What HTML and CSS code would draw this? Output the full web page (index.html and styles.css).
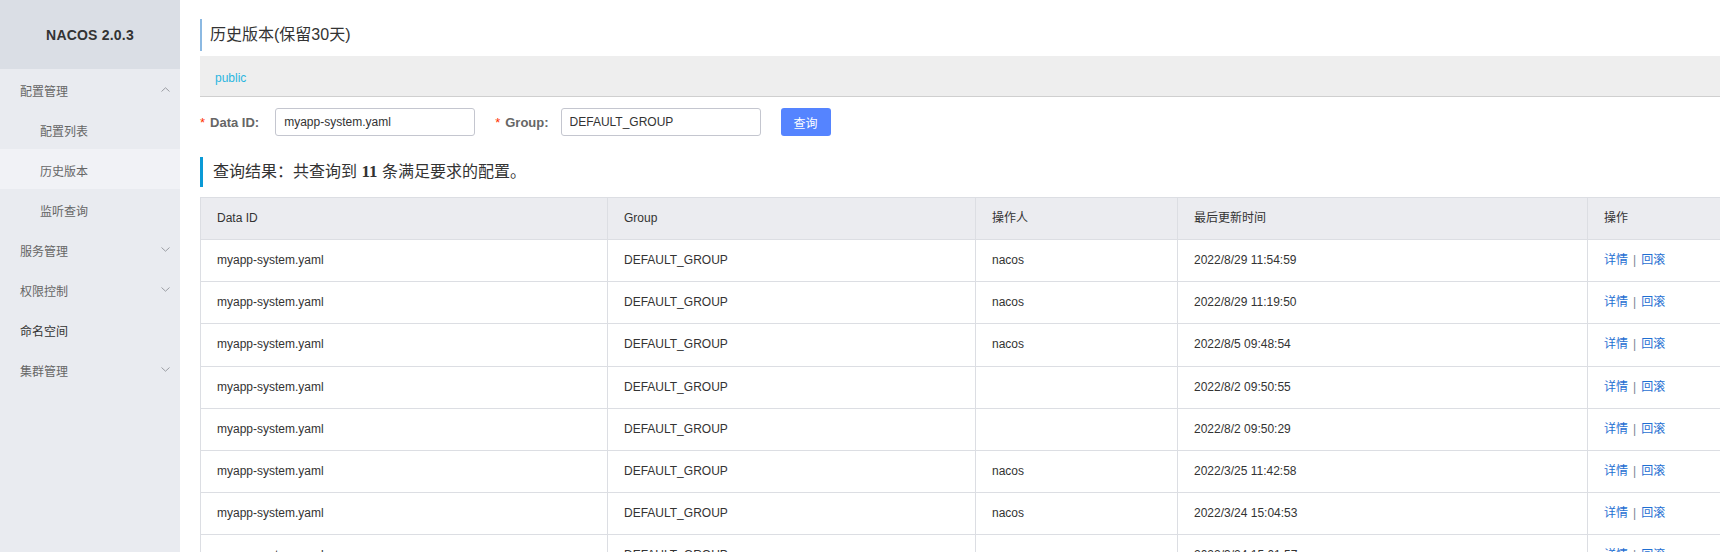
FILE: index.html
```html
<!DOCTYPE html>
<html lang="zh-CN">
<head>
<meta charset="utf-8">
<title>NACOS 2.0.3 - 历史版本</title>
<link rel="stylesheet" href="styles.css">
</head>
<body>
<div class="app">
  <aside class="sidebar">
    <div class="brand">NACOS 2.0.3</div>
    <nav class="menu">
      <div class="menu-item group">
        <span>配置管理</span>
        <svg class="chev" width="9" height="5" viewBox="0 0 9 5"><path d="M0.5 4.5 L4.5 0.8 L8.5 4.5" fill="none" stroke="#9a9ca3" stroke-width="1"/></svg>
      </div>
      <div class="menu-item sub">配置列表</div>
      <div class="menu-item sub active">历史版本</div>
      <div class="menu-item sub">监听查询</div>
      <div class="menu-item group">
        <span>服务管理</span>
        <svg class="chev" width="9" height="5" viewBox="0 0 9 5"><path d="M0.5 0.5 L4.5 4.2 L8.5 0.5" fill="none" stroke="#9a9ca3" stroke-width="1"/></svg>
      </div>
      <div class="menu-item group">
        <span>权限控制</span>
        <svg class="chev" width="9" height="5" viewBox="0 0 9 5"><path d="M0.5 0.5 L4.5 4.2 L8.5 0.5" fill="none" stroke="#9a9ca3" stroke-width="1"/></svg>
      </div>
      <div class="menu-item group dark">
        <span>命名空间</span>
      </div>
      <div class="menu-item group">
        <span>集群管理</span>
        <svg class="chev" width="9" height="5" viewBox="0 0 9 5"><path d="M0.5 0.5 L4.5 4.2 L8.5 0.5" fill="none" stroke="#9a9ca3" stroke-width="1"/></svg>
      </div>
    </nav>
  </aside>

  <main class="main">
    <h1 class="page-title">历史版本(保留30天)</h1>
    <div class="ns-bar"><span class="ns-link">public</span></div>

    <form class="search">
      <label class="field-label"><span class="req">*</span>Data ID:</label>
      <input class="input" type="text" value="myapp-system.yaml">
      <label class="field-label gap"><span class="req">*</span>Group:</label>
      <input class="input" type="text" value="DEFAULT_GROUP">
      <button class="btn" type="button">查询</button>
    </form>

    <div class="result-title">查询结果：共查询到 <strong class="count">11</strong> 条满足要求的配置。</div>

    <table class="grid">
      <colgroup>
        <col class="c1"><col class="c2"><col class="c3"><col class="c4"><col class="c5">
      </colgroup>
      <thead>
        <tr><th>Data ID</th><th>Group</th><th>操作人</th><th>最后更新时间</th><th>操作</th></tr>
      </thead>
      <tbody>
        <tr><td>myapp-system.yaml</td><td>DEFAULT_GROUP</td><td>nacos</td><td>2022/8/29 11:54:59</td><td><a class="lnk">详情</a><span class="sep">|</span><a class="lnk">回滚</a></td></tr>
        <tr><td>myapp-system.yaml</td><td>DEFAULT_GROUP</td><td>nacos</td><td>2022/8/29 11:19:50</td><td><a class="lnk">详情</a><span class="sep">|</span><a class="lnk">回滚</a></td></tr>
        <tr><td>myapp-system.yaml</td><td>DEFAULT_GROUP</td><td>nacos</td><td>2022/8/5 09:48:54</td><td><a class="lnk">详情</a><span class="sep">|</span><a class="lnk">回滚</a></td></tr>
        <tr><td>myapp-system.yaml</td><td>DEFAULT_GROUP</td><td></td><td>2022/8/2 09:50:55</td><td><a class="lnk">详情</a><span class="sep">|</span><a class="lnk">回滚</a></td></tr>
        <tr><td>myapp-system.yaml</td><td>DEFAULT_GROUP</td><td></td><td>2022/8/2 09:50:29</td><td><a class="lnk">详情</a><span class="sep">|</span><a class="lnk">回滚</a></td></tr>
        <tr><td>myapp-system.yaml</td><td>DEFAULT_GROUP</td><td>nacos</td><td>2022/3/25 11:42:58</td><td><a class="lnk">详情</a><span class="sep">|</span><a class="lnk">回滚</a></td></tr>
        <tr><td>myapp-system.yaml</td><td>DEFAULT_GROUP</td><td>nacos</td><td>2022/3/24 15:04:53</td><td><a class="lnk">详情</a><span class="sep">|</span><a class="lnk">回滚</a></td></tr>
        <tr><td>myapp-system.yaml</td><td>DEFAULT_GROUP</td><td></td><td>2022/3/24 15:01:57</td><td><a class="lnk">详情</a><span class="sep">|</span><a class="lnk">回滚</a></td></tr>
      </tbody>
    </table>
  </main>
</div>
</body>
</html>
```

FILE: styles.css
```css
* { box-sizing: border-box; }

html, body {
  margin: 0;
  padding: 0;
  height: 100%;
  overflow: hidden;
  background: #fff;
  font-family: "Liberation Sans", "Noto Sans CJK SC", sans-serif;
  font-size: 12px;
  color: #333;
}

.app {
  display: flex;
  height: 552px;
}

/* ---------- sidebar ---------- */
.sidebar {
  width: 180px;
  flex: 0 0 180px;
  background: #e9ebf0;
  display: flex;
  flex-direction: column;
}

.brand {
  height: 69px;
  background: #dadee5;
  display: flex;
  align-items: center;
  justify-content: center;
  font-weight: bold;
  font-size: 14px;
  color: #333;
  letter-spacing: 0.2px;
}

.menu {
  display: flex;
  flex-direction: column;
}

.menu-item {
  height: 40px;
  display: flex;
  align-items: center;
  justify-content: space-between;
  padding: 3px 10px 0 20px;
  color: #666;
  font-size: 12px;
}

.menu-item.sub { padding-left: 40px; }
.menu-item.active { background: #f1f2f6; }
.menu-item.dark { color: #333; }

.chev {
  margin-top: -3px;
  display: block;
}

/* ---------- main ---------- */
.main {
  flex: 1 1 auto;
  min-width: 0;
  overflow: hidden;
  padding: 19px 0 0 20px;
}

.page-title {
  margin: 0;
  height: 32px;
  line-height: 32px;
  border-left: 2px solid #8cb9e2;
  padding-left: 8px;
  font-size: 16px;
  font-weight: normal;
  color: #333;
}

.ns-bar {
  margin-top: 5px;
  height: 41px;
  background: #eee;
  border-bottom: 1px solid #cfcfcf;
  padding: 4px 0 0 15px;
  display: flex;
  align-items: center;
}

.ns-link {
  color: #2bb6e0;
  font-size: 12px;
}

/* ---------- search form ---------- */
.search {
  margin: 11px 0 0 0;
  display: flex;
  align-items: center;
  height: 28px;
}

.field-label {
  font-weight: bold;
  font-size: 13px;
  color: #666;
  margin-right: 16px;
  white-space: nowrap;
}

.field-label.gap {
  margin-left: 20px;
  margin-right: 12px;
}

.req {
  color: #ff3000;
  font-weight: normal;
  margin-right: 5px;
}

.input {
  width: 200px;
  height: 28px;
  border: 1px solid #c4c6cf;
  border-radius: 3px;
  padding: 0 8px;
  font-family: "Liberation Sans", "Noto Sans CJK SC", sans-serif;
  font-size: 12px;
  color: #333;
  background: #fff;
  outline: none;
}

.btn {
  margin-left: 20px;
  width: 50px;
  height: 28px;
  border: none;
  border-radius: 3px;
  background: #5584ff;
  color: #fff;
  font-family: "Liberation Sans", "Noto Sans CJK SC", sans-serif;
  font-size: 12px;
  padding: 0;
}

/* ---------- result ---------- */
.result-title {
  margin-top: 21px;
  height: 30px;
  line-height: 30px;
  border-left: 3px solid #0a9ad6;
  padding-left: 10px;
  font-size: 16px;
  color: #333;
}

.count {
  font-family: "Liberation Serif", serif;
  font-weight: bold;
  font-size: 17px;
}

/* ---------- table ---------- */
.grid {
  margin-top: 10px;
  table-layout: fixed;
  border-collapse: separate;
  border-spacing: 0;
  width: 1588px;
  border-left: 1px solid #dcdee3;
  border-top: 1px solid #dcdee3;
}

.c1 { width: 407px; }
.c2 { width: 368px; }
.c3 { width: 202px; }
.c4 { width: 410px; }
.c5 { width: 200px; }

.grid th,
.grid td {
  text-align: left;
  font-weight: normal;
  font-size: 12px;
  color: #333;
  height: 42px;
  line-height: 41.15px;
  padding: 0 16px;
  border-right: 1px solid #dcdee3;
  border-bottom: 1px solid #dcdee3;
  white-space: nowrap;
  overflow: hidden;
}

.grid th {
  background: #ebecf0;
}

.lnk {
  color: #1f6fd2;
  text-decoration: none;
}

.sep {
  color: #7a8694;
  margin: 0 5px;
}
```
